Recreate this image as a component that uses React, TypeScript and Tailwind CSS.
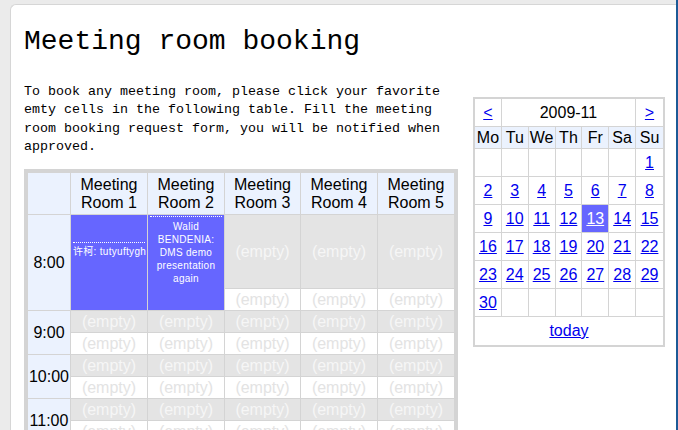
import React from 'react';

const ROOMS = ['Meeting Room 1', 'Meeting Room 2', 'Meeting Room 3', 'Meeting Room 4', 'Meeting Room 5'];
const HOURS = ['9:00', '10:00', '11:00', '12:00'];
const DAYS = ['Mo', 'Tu', 'We', 'Th', 'Fr', 'Sa', 'Su'];
const WEEKS: (number | null)[][] = [
  [null, null, null, null, null, null, 1],
  [2, 3, 4, 5, 6, 7, 8],
  [9, 10, 11, 12, 13, 14, 15],
  [16, 17, 18, 19, 20, 21, 22],
  [23, 24, 25, 26, 27, 28, 29],
  [30, null, null, null, null, null, null],
];

const cell = 'border-r border-b border-[#d4d4d4] last:border-r-0';

function Empty({ onHour }: { onHour: boolean }) {
  return (
    <td
      className={`${cell} p-0 text-center align-middle leading-[20px] ${
        onHour ? 'bg-[#e4e4e4] text-[#f6f6f6]' : 'bg-white text-[#e3e3e3]'
      }`}
    >
      (empty)
    </td>
  );
}

function TimeCell({ label }: { label: string }) {
  return (
    <td rowSpan={2} className={`${cell} bg-[#ebf2fe] p-0 text-center align-middle text-black`}>
      {label}
    </td>
  );
}

function Booking() {
  return (
    <table className="w-[434px] table-fixed border-separate border-spacing-0 border-4 border-[#d4d4d4] font-['Liberation_Sans',Arial,sans-serif] text-[16px] leading-[18px]">
      <colgroup>
        <col className="w-[43px]" />
        <col className="w-[77px]" />
        <col className="w-[77px]" />
        <col className="w-[76px]" />
        <col className="w-[77px]" />
        <col className="w-[76px]" />
      </colgroup>
      <tbody>
        <tr className="h-[42px]">
          <td className={`${cell} bg-[#ebf2fe]`} />
          {ROOMS.map((r) => (
            <td key={r} className={`${cell} bg-[#ebf2fe] px-1 text-center align-middle text-black`}>
              {r}
            </td>
          ))}
        </tr>

        {/* 8:00 - two bookings */}
        <tr className="h-[74px]">
          <TimeCell label="8:00" />
          <td rowSpan={2} className={`${cell} bg-[#6666ff] px-[2px] pt-[1px] align-top`}>
            <div className="mt-[26px] border-t border-dotted border-white pt-[2px] text-center font-['Liberation_Sans','Noto_Sans_CJK_SC',sans-serif] text-[10px] leading-[13px] tracking-[0.3px] whitespace-nowrap text-white">
              许柯: tutyuftygh
            </div>
          </td>
          <td rowSpan={2} className={`${cell} bg-[#6666ff] px-[2px] pt-[1px] align-top`}>
            <div className="border-t border-dotted border-white pt-[3px] text-center font-['Liberation_Sans',sans-serif] text-[10px] leading-[13px] tracking-[0.3px] text-white">
              Walid BENDENIA: DMS demo presentation again
            </div>
          </td>
          <Empty onHour />
          <Empty onHour />
          <Empty onHour />
        </tr>
        <tr className="h-[22px]">
          <Empty onHour={false} />
          <Empty onHour={false} />
          <Empty onHour={false} />
        </tr>

        {HOURS.map((h) => (
          <React.Fragment key={h}>
            <tr className="h-[22px]">
              <TimeCell label={h} />
              {ROOMS.map((r) => (
                <Empty key={r} onHour />
              ))}
            </tr>
            <tr className="h-[22px]">
              {ROOMS.map((r) => (
                <Empty key={r} onHour={false} />
              ))}
            </tr>
          </React.Fragment>
        ))}
      </tbody>
    </table>
  );
}

function Calendar() {
  return (
    <table className="w-[192px] table-fixed border-separate border-spacing-0 border-2 border-[#d4d4d4] font-['Liberation_Sans',Arial,sans-serif] text-[16px] leading-[18px]">
      <tbody>
        <tr className="h-[28px]">
          <td className={`${cell} text-center`}>
            <a className="text-[#0000ee] underline">&lt;</a>
          </td>
          <td colSpan={5} className={`${cell} text-center text-black`}>
            2009-11
          </td>
          <td className={`${cell} text-center`}>
            <a className="text-[#0000ee] underline">&gt;</a>
          </td>
        </tr>
        <tr className="h-[22px]">
          {DAYS.map((d) => (
            <td key={d} className={`${cell} bg-[#ebf2fe] p-0 text-center text-black`}>
              {d}
            </td>
          ))}
        </tr>
        {WEEKS.map((w, i) => (
          <tr key={i} className="h-[28px]">
            {w.map((d, j) => (
              <td
                key={j}
                className={`${cell} p-0 text-center align-middle ${d === 13 ? 'bg-[#6666ff]' : 'bg-white'}`}
              >
                {d !== null && (
                  <a className={`underline ${d === 13 ? 'text-white' : 'text-[#0000ee]'}`}>{d}</a>
                )}
              </td>
            ))}
          </tr>
        ))}
        <tr className="h-[28px]">
          <td colSpan={7} className="text-center align-middle">
            <a className="text-[#0000ee] underline">today</a>
          </td>
        </tr>
      </tbody>
    </table>
  );
}

export default function App() {
  return (
    <div className="h-[430px] w-[678px] overflow-hidden border-r-2 border-[#1c5a96] bg-[#ebebeb] pt-[4px] pl-[10px]">
      <div className="h-[600px] rounded-tl-[6px] border-t border-l border-[#d6d6d6] bg-white pt-[21px] pl-[13px]">
        <h1 className="font-['Liberation_Mono','Courier_New',monospace] text-[28px] leading-[32px] font-normal text-black">
          Meeting room booking
        </h1>
        <div className="flex items-start">
          <div className="w-[434px]">
            <p className="mt-[25px] font-['Liberation_Mono','Courier_New',monospace] text-[13.33px] leading-[18.3px] text-black">
              To book any meeting room, please click your favorite emty cells in the following table. Fill the meeting
              room booking request form, you will be notified when approved.
            </p>
            <div className="mt-[13px]">
              <Booking />
            </div>
          </div>
          <div className="mt-[39px] ml-[15px]">
            <Calendar />
          </div>
        </div>
      </div>
    </div>
  );
}
